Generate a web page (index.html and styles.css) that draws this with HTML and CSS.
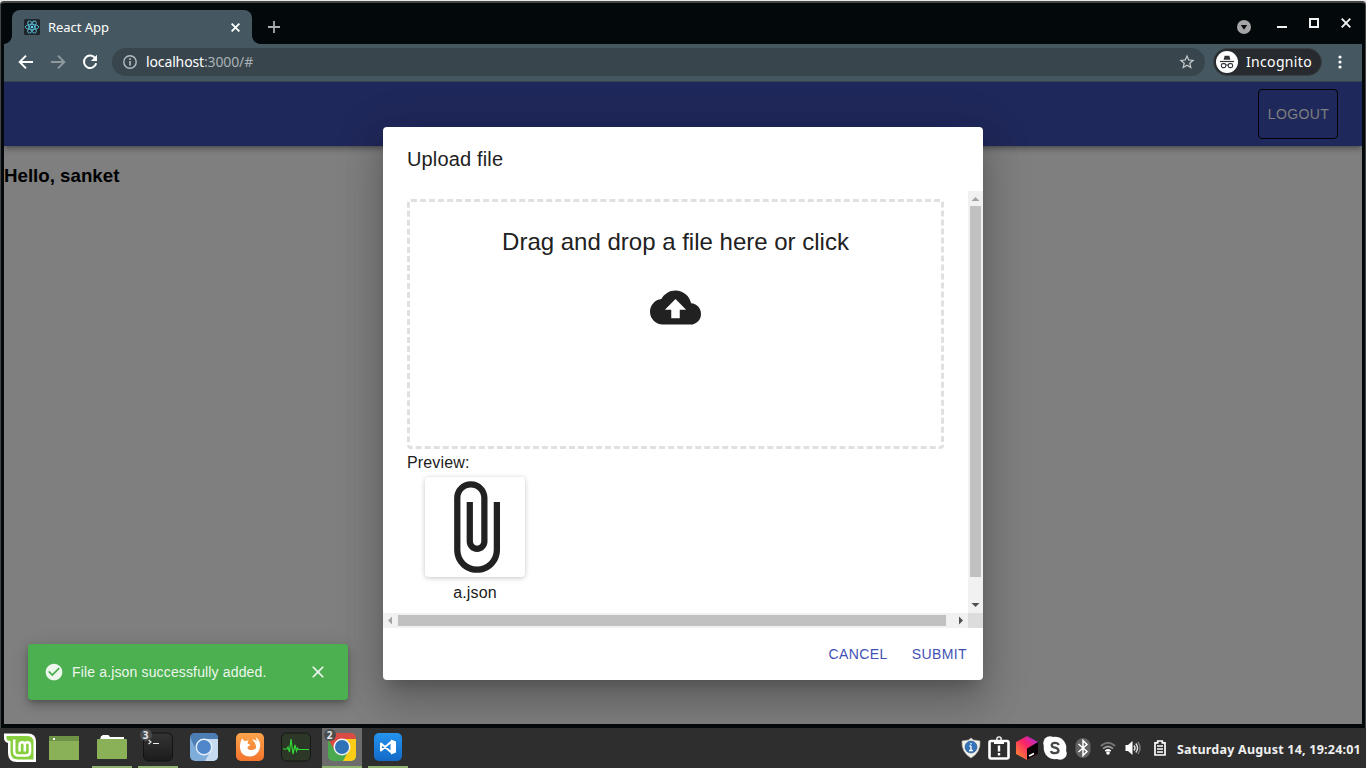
FILE: index.html
```html
<!DOCTYPE html>
<html lang="en">
<head>
<meta charset="utf-8">
<title>React App</title>
<link rel="stylesheet" href="styles.css">
</head>
<body>
<div class="window">
  <div class="titlebar">
    <div class="tab">
      <svg class="favicon" width="16" height="16" viewBox="0 0 16 16"><rect width="16" height="16" rx="1.5" fill="#20232a"/><g fill="none" stroke="#55b9d1" stroke-width=".9"><ellipse cx="8" cy="8" rx="6.8" ry="2.6"/><ellipse cx="8" cy="8" rx="6.8" ry="2.6" transform="rotate(60 8 8)"/><ellipse cx="8" cy="8" rx="6.8" ry="2.6" transform="rotate(120 8 8)"/></g><circle cx="8" cy="8" r="1.3" fill="#61dafb"/></svg>
      <span class="tab-title">React App</span>
      <svg class="tab-close" width="9" height="9" viewBox="0 0 9 9"><path d="M.6.6l7.800 7.800M8.400.6L.6 8.400" stroke="#fff" stroke-width="1.800"/></svg>
    </div>
    <svg class="new-tab" width="12" height="12" viewBox="0 0 12 12"><path d="M6 0v12M0 6h12" stroke="#a9adae" stroke-width="1.8"/></svg>
    <div class="window-controls">
      <svg width="14" height="14" viewBox="0 0 14 14" class="tab-search"><circle cx="7" cy="7" r="7" fill="#a3a5a6"/><path d="M3.8 5h6.4L7 9.8z" fill="#080c0e"/></svg>
      <svg width="10" height="10" viewBox="0 0 10 10"><path d="M0 9h10" stroke="#f1f3f3" stroke-width="2"/></svg>
      <svg width="10" height="10" viewBox="0 0 10 10"><path d="M1 1h8v8H1z" fill="none" stroke="#f1f3f3" stroke-width="2"/></svg>
      <svg width="10" height="10" viewBox="0 0 10 10"><path d="M.7.7l8.6 8.6M9.3.7L.7 9.3" stroke="#f1f3f3" stroke-width="1.9"/></svg>
    </div>
  </div>

  <div class="toolbar">
    <svg class="nav" width="16" height="16" viewBox="0 0 16 16"><path d="M15 8H2M8 1.7L1.7 8 8 14.3" fill="none" stroke="#fff" stroke-width="1.9"/></svg>
    <svg class="nav" width="16" height="16" viewBox="0 0 16 16"><path d="M1 8h13M8 1.7L14.3 8 8 14.3" fill="none" stroke="#8f9a9f" stroke-width="1.9"/></svg>
    <svg class="nav" width="16" height="16" viewBox="0 0 16 16"><path d="M13.3 4.3A6.2 6.2 0 1 0 14.2 9.2" fill="none" stroke="#fff" stroke-width="2"/><path d="M15 .8v6.1H8.9z" fill="#fff"/></svg>
    <div class="address">
      <svg width="14" height="14" viewBox="0 0 14 14"><circle cx="7" cy="7" r="6.2" fill="none" stroke="#b6bdc0" stroke-width="1.4"/><path d="M7 6v4.5M7 3.3V5" stroke="#b6bdc0" stroke-width="1.6"/></svg>
      <span class="url"><b>localhost</b>:3000/#</span>
      <svg class="star" width="16" height="16" viewBox="1.500 1.500 21 21"><path fill="#c5cacc" d="M22 9.24l-7.19-.62L12 2 9.19 8.63 2 9.24l5.46 4.73L5.82 21 12 17.27 18.18 21l-1.63-7.03L22 9.24zM12 15.4l-3.76 2.27 1-4.28-3.32-2.88 4.38-.38L12 6.1l1.71 4.04 4.38.38-3.32 2.88 1 4.28L12 15.4z"/></svg>
    </div>
    <div class="incognito">
      <svg width="22" height="22" viewBox="0 0 22 22"><circle cx="11" cy="11" r="11" fill="#fff"/><path d="M7.6 8.7l1-4h4.8l1 4z" fill="#303438"/><path d="M4 10.5h14" stroke="#303438" stroke-width="1.2"/><g fill="none" stroke="#303438" stroke-width="1.1"><rect x="5.4" y="12.6" width="4.4" height="4" rx="1.6"/><rect x="12.2" y="12.6" width="4.4" height="4" rx="1.6"/><path d="M9.8 14h2.4"/></g></svg>
      <span>Incognito</span>
    </div>
    <svg class="menu-dots" width="4" height="14" viewBox="0 0 4 14" fill="#fff"><circle cx="2" cy="2" r="1.6"/><circle cx="2" cy="7" r="1.6"/><circle cx="2" cy="12" r="1.6"/></svg>
  </div>

  <div class="page">
    <header class="appbar"><button class="logout">LOGOUT</button></header>
    <h3 class="greeting">Hello, sanket</h3>

    <section class="dialog">
      <h2 class="dialog-title">Upload file</h2>
      <div class="dialog-body">
        <div class="dialog-content">
          <div class="dropzone">
            <p>Drag and drop a file here or click</p>
            <svg width="51" height="51" viewBox="0 0 24 24" fill="#212121"><path d="M19.35 10.04C18.67 6.59 15.64 4 12 4 9.11 4 6.6 5.64 5.35 8.04 2.34 8.36 0 10.91 0 14c0 3.31 2.69 6 6 6h13c2.76 0 5-2.24 5-5 0-2.64-2.05-4.78-4.65-4.96zM14 13v4h-4v-4H7l5-5 5 5h-3z"/></svg>
          </div>
          <div class="preview-label">Preview:</div>
          <div class="preview">
            <svg class="thumb" width="100" height="100" viewBox="0 0 24 24" fill="#212121"><path d="M16.5 6v11.5c0 2.21-1.79 4-4 4s-4-1.79-4-4V5c0-1.38 1.12-2.5 2.5-2.5s2.5 1.12 2.5 2.5v10.5c0 .55-.45 1-1 1s-1-.45-1-1V6H10v9.5c0 1.38 1.12 2.5 2.5 2.5s2.5-1.12 2.5-2.5V5c0-2.21-1.79-4-4-4S7 2.79 7 5v12.5c0 3.04 2.46 5.5 5.5 5.5s5.5-2.46 5.5-5.5V6h-1.5z"/></svg>
            <span>a.json</span>
          </div>
        </div>
        <div class="vscroll">
          <svg width="15" height="15" viewBox="0 0 15 15"><path d="M3.5 10L7.5 6l4 4z" fill="#a3a3a3"/></svg>
          <i class="vthumb"></i>
          <svg width="15" height="15" viewBox="0 0 15 15"><path d="M3.5 5l4 4 4-4z" fill="#505050"/></svg>
        </div>
        <div class="hscroll">
          <svg width="15" height="15" viewBox="0 0 15 15"><path d="M9 3.5l-4 4 4 4z" fill="#a3a3a3"/></svg>
          <i class="hthumb"></i>
          <svg width="15" height="15" viewBox="0 0 15 15"><path d="M6 3.5l4 4-4 4z" fill="#505050"/></svg>
        </div>
        <div class="corner"></div>
      </div>
      <div class="dialog-actions"><button>CANCEL</button><button>SUBMIT</button></div>
    </section>

    <div class="snackbar">
      <svg width="20" height="20" viewBox="0 0 24 24" fill="#edf7ed"><path d="M12 2C6.48 2 2 6.48 2 12s4.48 10 10 10 10-4.48 10-10S17.52 2 12 2zm-2 15l-5-5 1.41-1.41L10 14.17l7.59-7.59L19 8l-9 9z"/></svg>
      <span>File a.json successfully added.</span>
      <svg class="snack-close" width="20" height="20" viewBox="0 0 24 24" fill="#edf7ed"><path d="M19 6.41L17.59 5 12 10.59 6.41 5 5 6.41 10.59 12 5 17.59 6.41 19 12 13.41 17.59 19 19 17.59 13.41 12z"/></svg>
    </div>
  </div>
</div>

<footer class="taskbar">
  <svg class="task mint" viewBox="0 0 40 40"><path d="M4 5.500h24q8 0 8 8v20.500H17q-9 0-9-9v-10q-4-1-4-5z" fill="#fff"/><path d="M6.500 8h21q6 0 6 6.500v17H18q-7.500 0-7.500-7.500V13q-4 0-4-3z" fill="#87cf3e"/><path d="M14.200 11.500v11.500q0 4.500 4.300 4.500h7.500q4 0 4-4V17q0-2.800-2.600-2.800t-2.600 2.800v6.500M24.800 17q0-2.800-2.600-2.800t-2.600 2.800v6.500" fill="none" stroke="#fff" stroke-width="2.500"/></svg>
  <svg class="task" viewBox="0 0 40 40"><path d="M5 8h30v24H5z" fill="#8ab158"/><path d="M5 8h30v5H5z" fill="#6d9145"/><path d="M9 10h2v2H9z" fill="#fff"/></svg>
  <svg class="task running folder" viewBox="0 0 40 40"><path d="M8 12l1-4h1q0-1 1-1h5q1 0 2 2h14v3z" fill="#fff"/><rect x="5" y="11" width="30" height="20" rx="1" fill="#8ab158"/></svg>
  <svg class="task running" viewBox="0 0 40 40"><defs><linearGradient id="term" x2="0" y2="1"><stop stop-color="#343434"/><stop offset="1" stop-color="#1c1c1c"/></linearGradient></defs><rect x="5.500" y="5" width="29" height="28" rx="5" fill="url(#term)" stroke="#121212"/><path d="M10.500 12l2.500 2-2.500 2M15 15.500h6" fill="none" stroke="#eee" stroke-width="1.200"/><circle cx="8" cy="7" r="6" fill="#4b4c4e"/><text class="badge" x="4.700" y="10.500">3</text></svg>
  <svg class="task" viewBox="0 0 40 40"><defs><clipPath id="tile"><rect x="6" y="5" width="28" height="28" rx="5"/></clipPath></defs><g clip-path="url(#tile)"><path d="M6 5h28v28H6z" fill="#7fadd9"/><path d="M6 5h28v6H20L13 24 6 9z" fill="#4c7db5"/><path d="M20 11h14v22H21l6-11z" fill="#c6dbef"/></g><circle cx="20" cy="19" r="8.500" fill="#e7f1fb"/><circle cx="20" cy="19" r="7" fill="#4f87ca"/></svg>
  <svg class="task" viewBox="0 0 40 40"><defs><linearGradient id="fox" x2="0" y2="1"><stop stop-color="#fca44b"/><stop offset="1" stop-color="#f3752d"/></linearGradient></defs><rect x="6" y="5" width="28" height="28" rx="5" fill="url(#fox)"/><path d="M12 10.500l2.500 2.500 4-.5-1 3 3 1.500-3 2q0 3.500 4 3 3 0 4.500-2 .5-5-4-8.500 3.500 0 5 2l-1.500-4.500q5.500 4 4.500 10-1.500 9-10 9.500-9 0-10-8.500-.5-5 2-9.500z" fill="#fff"/></svg>
  <svg class="task" viewBox="0 0 40 40"><rect x="5.500" y="5" width="29" height="28" rx="5" fill="#2c3727" stroke="#151914"/><path d="M7 21h4l1-2 1.500 5L15 11l2 15 2-9 1.500 6 1-3 1 1.500H33" fill="none" stroke="#32d936" stroke-width="1.200"/></svg>
  <svg class="task running active" viewBox="0 0 40 40"><g clip-path="url(#tile)"><path d="M6 5h28v28H6z" fill="#4aa84f"/><path d="M6 5h28v6H20L13 23 6 11z" fill="#dc4b43"/><path d="M20 11h14v22H21l6-11z" fill="#fbcd16"/></g><circle cx="20" cy="19" r="8.500" fill="#f2f2f2"/><circle cx="20" cy="19" r="7" fill="#2f72b5"/><circle cx="8" cy="7" r="6" fill="#4b4c4e"/><text class="badge" x="4.700" y="10.500">2</text></svg>
  <svg class="task running" viewBox="0 0 40 40"><defs><linearGradient id="code" x2="0" y2="1"><stop stop-color="#2494ee"/><stop offset="1" stop-color="#126ac6"/></linearGradient></defs><rect x="6" y="5" width="28" height="28" rx="5" fill="url(#code)"/><path d="M13 15.500L23.500 24.500V13.500L13 22.500z" fill="none" stroke="#fff" stroke-width="2" stroke-linejoin="round"/><path d="M23 11.500l5 2v11l-5 2z" fill="#fff"/></svg>

  <div class="tray">
    <svg class="shield" width="20" height="22" viewBox="0 0 20 22"><path d="M10 1l2.500 2L19 4q1 11-9 17Q0 15 1 4l6.500-1z" fill="#f3f1ea" stroke="#b8b8b8" stroke-width=".6"/><circle cx="10" cy="10" r="6" fill="#3574b9" stroke="#23517f" stroke-width=".6"/><path d="M10 9v4.500M8.500 9H10M8 13.500h4M10 6v1.500" stroke="#fff" stroke-width="1.300"/></svg>
    <svg class="clipboard" width="22" height="24" viewBox="0 0 22 24"><rect x="1.500" y="5" width="19" height="17.500" rx="1.500" fill="none" stroke="#fff" stroke-width="2.600"/><circle cx="11" cy="3" r="2.200" fill="none" stroke="#fff" stroke-width="1.300"/><path d="M6 4h10v4H6z" fill="#fff"/><path d="M11 9.500v6M11 17v2.500" stroke="#fff" stroke-width="2.400"/></svg>
    <svg class="toolbox" width="22" height="24" viewBox="0 0 22 24"><defs><linearGradient id="cube" x1="1" x2="0" y2="1"><stop stop-color="#a22bf0"/><stop offset=".45" stop-color="#fb2466"/><stop offset="1" stop-color="#ff9a28"/></linearGradient></defs><path d="M11 0l11 6v12l-11 6-11-6V6z" fill="url(#cube)"/><path d="M11 12.500L22 6v12l-11 6z" fill="#080407"/><path d="M13 20l5-2.500" stroke="#fff" stroke-width="1.500"/></svg>
    <svg class="skype" width="24" height="24" viewBox="0 0 24 24"><circle cx="12" cy="12" r="11.300" fill="#fff"/><circle cx="7" cy="7" r="6.800" fill="#fff"/><circle cx="17" cy="17" r="6.800" fill="#fff"/><path d="M15.800 9q-.8-2.200-3.800-2.200T8.700 9.200q0 1.800 3.300 2.500t3.500 2.900q0 2.600-3.500 2.600T8 14.900" fill="none" stroke="#46494b" stroke-width="2.300"/></svg>
    <svg class="bluetooth" width="16" height="22" viewBox="0 0 16 22"><rect x=".5" y="1" width="15" height="20" rx="7.500" fill="#626262"/><path d="M3.500 7l8.500 7.500-4 4v-15l4 4L3.500 15" fill="none" stroke="#fff" stroke-width="1.500"/></svg>
    <svg class="wifi" width="16" height="16" viewBox="0 0 16 16"><g fill="none" stroke-width="1.800"><path d="M.8 6q7.200-6.500 14.400 0" stroke="#777"/><path d="M3 8.700q5-4.500 10 0" stroke="#999"/><path d="M5.300 11.200q2.700-2.400 5.400 0" stroke="#fff"/></g><circle cx="8" cy="13" r="1.800" fill="#fff"/></svg>
    <svg class="volume" width="16" height="16" viewBox="0 0 16 16"><path d="M.5 5H3l4.500-4v14L3 11H.500z" fill="#fff"/><g fill="none" stroke-width="1.500"><path d="M9 5.500q2 2.500 0 5M10.800 3.500q3.600 4.500 0 9" stroke="#ddd"/><path d="M12.800 2q4.500 6 0 12" stroke="#777"/></g></svg>
    <svg width="12" height="16" viewBox="0 0 12 16"><path d="M1 2.800h2.700V1h4.600v1.800H11V15H1z" fill="none" stroke="#fff" stroke-width="1.700"/><path d="M3 6h6M3 9h6M3 12h6" stroke="#fff" stroke-width="1.700"/></svg>
  </div>
  <span class="clock">Saturday August 14, 19:24:01</span>
</footer>
</body>
</html>
```
FILE: styles.css
```css
* { box-sizing: border-box; }
body {
  margin: 0;
  width: 1366px;
  height: 768px;
  overflow: hidden;
  display: flex;
  flex-direction: column;
  background: #e6e6e6;
  font-family: "Liberation Sans", Arial, sans-serif;
}
svg { display: block; flex: none; }
button { background: none; border: 0; font: inherit; }

.window {
  height: 727px;
  margin-top: 1px;
  flex: none;
  background: #03090b;
  border: 1px solid #454747;
  border-top-width: 2px;
  border-bottom: 0;
  border-radius: 4px 4px 0 0;
  padding: 0 3px 4px;
  display: flex;
  flex-direction: column;
}
.titlebar { height: 41px; display: flex; padding: 7px 8px 0; flex: none; }
.tab {
  position: relative;
  width: 240px;
  height: 34px;
  padding: 0 12px;
  display: flex;
  align-items: center;
  background: #455861;
  border-radius: 8px 8px 0 0;
  color: #fff;
}
.tab::before, .tab::after {
  content: "";
  position: absolute;
  bottom: 0;
  width: 8px;
  height: 8px;
}
.tab::before { left: -8px; background: radial-gradient(circle at 0 0, transparent 7.5px, #455861 8px); }
.tab::after { right: -8px; background: radial-gradient(circle at 100% 0, transparent 7.5px, #455861 8px); }
.tab-title { font: 13px "Noto Sans", sans-serif; margin-left: 8px; letter-spacing: -.05px; }
.tab-close { margin-left: auto; }
.new-tab { margin: 11px 0 0 16px; }
.window-controls { margin: 8px 3px 0 auto; display: flex; gap: 22px; }
.tab-search { margin: 2px 4px 0 0; }

.toolbar {
  height: 38px;
  flex: none;
  display: flex;
  align-items: center;
  padding: 0 20px 2px 14px;
  background: #455861;
  border-bottom: 1px solid #35454e;
}
.nav { margin-right: 16px; }
.address {
  width: 1093px;
  height: 28px;
  margin-left: -2px;
  border-radius: 14px;
  background: #38454c;
  display: flex;
  align-items: center;
  padding: 0 10px 0 11px;
}
.url { font: 14px "Noto Sans", sans-serif; color: #a9b2b6; margin-left: 9px; letter-spacing: -.13px; }
.url b { font-weight: 400; color: #fff; }
.star { margin-left: auto; }
.incognito {
  width: 109px;
  height: 28px;
  margin-left: 8px;
  border: 1px solid #3a4043;
  border-radius: 14px;
  background: #272b2f;
  color: #fff;
  display: flex;
  align-items: center;
  padding-left: 2px;
  font: 14px "Noto Sans", sans-serif;
  letter-spacing: .33px;
}
.incognito span { margin-left: 8px; }
.menu-dots { margin-left: auto; }

.page { position: relative; flex: 1; background: #7f7f7f; overflow: hidden; }
.appbar {
  height: 64px;
  display: flex;
  align-items: center;
  justify-content: flex-end;
  padding-right: 24px;
  background: #1f285a;
  box-shadow: 0 2px 4px -1px rgba(0,0,0,.3), 0 4px 5px rgba(0,0,0,.12), 0 1px 10px rgba(0,0,0,.1);
}
.logout {
  width: 80px;
  height: 50px;
  border: 1px solid #000;
  border-radius: 4px;
  color: #7f7f7f;
  font-size: 14px;
  letter-spacing: .4px;
  padding: 0 0 0 1px;
}
.greeting { margin: 19px 0 0; font-size: 18.72px; line-height: 22px; color: #000; }

.dialog {
  position: absolute;
  left: 379px;
  top: 45px;
  width: 600px;
  height: 553px;
  display: flex;
  flex-direction: column;
  background: #fff;
  border-radius: 4px;
  color: #212121;
  box-shadow: 0 11px 15px -7px rgba(0,0,0,.2), 0 24px 38px 3px rgba(0,0,0,.14), 0 9px 46px 8px rgba(0,0,0,.12);
}
.dialog-title { margin: 0; padding: 16px 24px; font-size: 20px; font-weight: 400; line-height: 32px; letter-spacing: .15px; }
.dialog-body { display: grid; grid-template: 422px 15px / 585px 15px; }
.dialog-content { padding: 8px 24px 0; }
.dropzone {
  height: 250px;
  border: 3px dashed #e0e0e0;
  border-radius: 4px;
  display: flex;
  flex-direction: column;
  align-items: center;
}
.dropzone p { margin: 24px 0; font-size: 24px; line-height: 32px; }
.preview-label { font-size: 16px; line-height: 24px; letter-spacing: .15px; margin-top: 2px; }
.preview { width: 100px; margin: 2px 0 0 18px; display: flex; flex-direction: column; align-items: center; }
.thumb { border-radius: 4px; box-shadow: 0 1px 6px rgba(0,0,0,.12), 0 1px 4px rgba(0,0,0,.12); }
.preview span { font-size: 16px; line-height: 24px; letter-spacing: .15px; margin-top: 4px; }
.vscroll { background: #f1f1f1; display: flex; flex-direction: column; }
.vthumb { height: 371px; margin: 0 2px auto; background: #c1c1c1; }
.hscroll { background: #f1f1f1; display: flex; }
.hthumb { width: 548px; margin: 2px auto 2px 0; background: #c1c1c1; }
.corner { background: #dcdcdc; }
.dialog-actions { flex: 1; display: flex; align-items: center; justify-content: flex-end; gap: 24px; padding-right: 16px; }
.dialog-actions button { padding: 0; color: #3f51b5; font-size: 14px; letter-spacing: .4px; }

.snackbar {
  position: absolute;
  left: 24px;
  top: 562px;
  width: 320px;
  height: 56px;
  display: flex;
  align-items: center;
  padding: 0 20px 0 16px;
  border-radius: 4px;
  background: #4caf50;
  color: #edf7ed;
  font-size: 14px;
  letter-spacing: .15px;
  box-shadow: 0 3px 5px -1px rgba(0,0,0,.2), 0 6px 10px rgba(0,0,0,.14), 0 1px 18px rgba(0,0,0,.12);
}
.snackbar span { margin-left: 8px; }
.snack-close { margin-left: auto; }

.taskbar { height: 40px; flex: none; display: flex; align-items: center; background: #2e2e2e; }
.task { width: 40px; height: 40px; margin-right: 6px; }
.task.mint { margin-right: 4px; }
.task.folder { margin-left: 2px; }
.running { box-shadow: inset 0 -2px #8fb26f; }
.active { background: #6c6c6c; }
.badge { font: bold 10px "Noto Sans", sans-serif; fill: #e5e7ea; }
.tray { display: flex; align-items: center; margin-left: auto; }
.shield { margin-right: 7px; }
.clipboard { margin-right: 6px; }
.toolbox { margin-right: 5px; }
.skype { margin-right: 8px; }
.bluetooth { margin-right: 9px; }
.wifi { margin-right: 9px; }
.volume { margin-right: 13px; }
.clock { width: 185px; margin: 2px 4px 0 11px; white-space: nowrap; color: #f0f0f0; font: bold 12.5px "Noto Sans", sans-serif; letter-spacing: .22px; }
```
